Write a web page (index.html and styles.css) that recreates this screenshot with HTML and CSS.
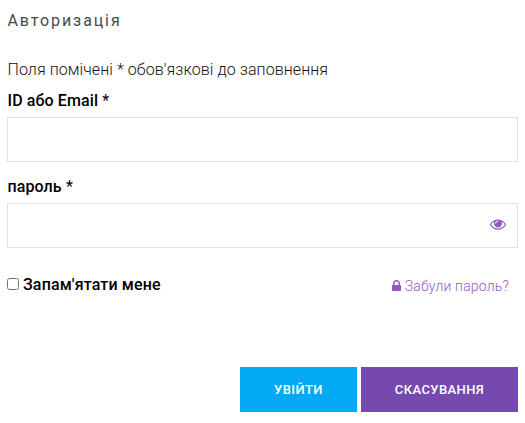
FILE: index.html
```
<!DOCTYPE html>
<html lang="uk">
<head>
    <meta charset="UTF-8">
    <meta name="viewport" content="width=device-width, initial-scale=1.0">
    <title>Авторизація</title>
    <link rel="stylesheet" href="styles.css">
</head>
<body>

<form class="login">
    <h1 class="title">Авторизація</h1>
    <p class="note">Поля помічені * обов'язкові до заповнення</p>

    <label class="label" for="login">ID або Email <span class="required">*</span></label>
    <input class="input" type="text" id="login">

    <label class="label" for="password">пароль <span class="required">*</span></label>
    <div class="password">
        <input class="input" type="password" id="password">
        <svg class="eye" viewBox="0 0 1792 1792"><path d="M1664 960q-152-236-381-353 61 104 61 225 0 185-131.500 316.500t-316.500 131.500-316.500-131.500-131.500-316.500q0-121 61-225-229 117-381 353 133 205 333.500 326.500t434.500 121.500 434.500-121.500 333.500-326.500zm-720-384q0-20-14-34t-34-14q-125 0-214.500 89.500t-89.500 214.500q0 20 14 34t34 14 34-14 14-34q0-86 61-147t147-61q20 0 34-14t14-34zm848 384q0 34-20 69-140 230-376.500 368.500t-499.500 138.500-499.500-139-376.500-368q-20-35-20-69t20-69q140-229 376.500-368t499.500-139 499.500 139 376.500 368q20 35 20 69z"/></svg>
    </div>

    <div class="options">
        <label class="remember"><input class="checkbox" type="checkbox">Запам'ятати мене</label>
        <a class="forgot" href="#">
            <svg class="lock" viewBox="320 128 1152 1536"><path d="M640 768h512v-192q0-106-75-181t-181-75-181 75-75 181v192zm832 96v576q0 40-28 68t-68 28h-960q-40 0-68-28t-28-68v-576q0-40 28-68t68-28h32v-192q0-184 132-316t316-132 316 132 132 316v192h32q40 0 68 28t28 68z"/></svg>
            <span>Забули пароль?</span>
        </a>
    </div>

    <div class="buttons">
        <button class="btn btn-login" type="button">Увійти</button>
        <button class="btn btn-cancel" type="button">Скасування</button>
    </div>
</form>

</body>
</html>
```

FILE: styles.css
```
* {
    box-sizing: border-box;
}
body {
    margin: 0;
    background: #fff;
    color: #000;
    font-family: Roboto, sans-serif;
    font-size: 16px;
    line-height: 24px;
}
.login {
    padding: 9px 7px 0;
}
.title {
    margin: 0 0 25px;
    padding-left: 0.5px;
    font-size: 16px;
    font-weight: 400;
    letter-spacing: 1.9px;
    color: #4a4a4a;
}
.note {
    margin: 0 0 7px;
    padding-left: 0.5px;
    font-weight: 300;
    letter-spacing: 0.08px;
    color: #111;
}
.label {
    display: block;
    padding-left: 0.5px;
    margin-bottom: 4px;
    font-weight: 500;
    letter-spacing: 0.1px;
}
.required {
    font-weight: 400;
}
.input {
    display: block;
    width: 100%;
    height: 45px;
    margin-bottom: 13px;
    padding: 0 12px;
    border: 1px solid #e1e1e1;
    background: #fff;
    font: inherit;
}
.password {
    position: relative;
}
/* toggle sits over the field */
.eye {
    position: absolute;
    top: 13px;
    right: 12px;
    width: 16px;
    height: 16px;
    fill: #9259c0;
}
.options {
    display: flex;
    justify-content: space-between;
    margin-top: 24px;
    padding-right: 9px;
}
.remember {
    display: flex;
    align-items: center;
    font-weight: 500;
    letter-spacing: 0.15px;
}
.checkbox {
    width: 12px;
    height: 12px;
    margin: 0 4px 2px 0;
}
.forgot {
    display: flex;
    align-items: center;
    gap: 4px;
    padding-top: 2px;
    font-size: 14px;
    font-weight: 300;
    letter-spacing: 0.18px;
    color: #9259c0;
    text-decoration: none;
}
.lock {
    width: 9px;
    height: 12px;
    fill: #9259c0;
}
.buttons {
    display: flex;
    justify-content: flex-end;
    gap: 4px;
    margin-top: 69px;
}
.btn {
    height: 45px;
    padding: 0;
    border: 0;
    color: #fff;
    font-family: Roboto, sans-serif;
    font-size: 13px;
    font-weight: 500;
    letter-spacing: 0.4px;
    text-transform: uppercase;
}
.btn-login {
    width: 117px;
    background: #03a9f4;
}
.btn-cancel {
    width: 157px;
    background: #7649af;
}
```
